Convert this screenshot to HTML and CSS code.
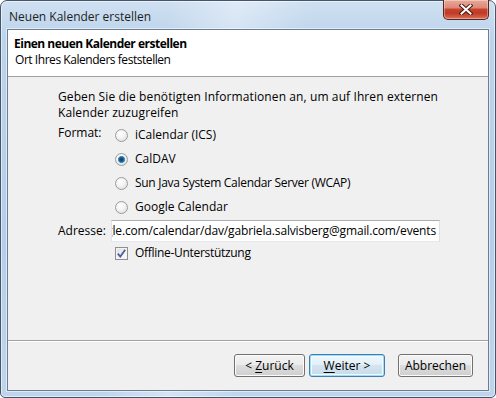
FILE: index.html
```html
<!DOCTYPE html>
<html lang="de">
<head>
<meta charset="utf-8">
<title>Neuen Kalender erstellen</title>
<link rel="stylesheet" href="styles.css">
</head>
<body>
<div class="window">
  <div class="titlebar">
    <span class="title">Neuen Kalender erstellen</span>
    <button class="close" aria-label="Schließen">
      <svg width="14" height="11" viewBox="0 0 14 11"><path d="M2.5 1.5 L11.5 9.5 M11.5 1.5 L2.5 9.5" stroke="#4a1a12" stroke-width="4" stroke-linecap="square" fill="none"/><path d="M2.5 1.5 L11.5 9.5 M11.5 1.5 L2.5 9.5" stroke="#ffffff" stroke-width="2" stroke-linecap="square" fill="none"/></svg>
    </button>
  </div>
  <div class="client">
    <div class="header">
      <div class="h-title">Einen neuen Kalender erstellen</div>
      <div class="h-sub">Ort Ihres Kalenders feststellen</div>
    </div>
    <div class="content">
      <p class="intro">Geben Sie die benötigten Informationen an, um auf Ihren externen<br>Kalender zuzugreifen</p>
      <div class="form">
        <div class="label label-format">Format:</div>
        <div class="radios">
          <div class="opt"><span class="radio"></span><span class="lbl">iCalendar (ICS)</span></div>
          <div class="opt"><span class="radio checked"></span><span class="lbl">CalDAV</span></div>
          <div class="opt"><span class="radio"></span><span class="lbl narrow">Sun Java System Calendar Server (WCAP)</span></div>
          <div class="opt"><span class="radio"></span><span class="lbl">Google Calendar</span></div>
        </div>
        <div class="label label-addr">Adresse:</div>
        <div class="input"><span>gle.com/calendar/dav/gabriela.salvisberg@gmail.com/events</span></div>
        <div class="spacer"></div>
        <div class="opt check-row"><span class="checkbox"><svg width="9" height="9" viewBox="0 0 9 9"><path d="M0.8 4.6 L3.3 7.6 L8.2 0.8" stroke="#4c619a" stroke-width="1.8" fill="none"/></svg></span><span class="lbl narrow">Offline-Unterstützung</span></div>
      </div>
    </div>
    <div class="footer">
      <button class="btn btn-back">&lt; <u>Z</u>urück</button>
      <button class="btn btn-next default"><u>W</u>eiter &gt;</button>
      <button class="btn btn-cancel">Abbrechen</button>
    </div>
  </div>
</div>
</body>
</html>
```

FILE: styles.css
```css
html, body {
  margin: 0;
  padding: 0;
  width: 496px;
  height: 398px;
  overflow: hidden;
  background: #ffffff;
}

body {
  font-family: "Open Sans", "Noto Sans", "DejaVu Sans", sans-serif;
  font-size: 12px;
  color: #000;
}

.window {
  box-sizing: border-box;
  width: 496px;
  height: 398px;
  border: 1px solid #44566c;
  border-radius: 7px 7px 5px 5px;
  background:
    linear-gradient(100deg, rgba(255,255,255,0) 30%, rgba(255,255,255,0.35) 42%, rgba(255,255,255,0) 55%),
    linear-gradient(180deg, #cfe0f2 0%, #bcd3ea 10%, #b6cee8 60%, #bfd5ec 100%);
  padding: 0 6px 6px 6px;
  display: flex;
  flex-direction: column;
  box-shadow: inset 0 0 0 1px rgba(255,255,255,0.55);
}

.titlebar {
  height: 28px;
  display: flex;
  align-items: flex-start;
}

.title {
  padding: 8px 0 0 2px;
  line-height: 16px;
  color: #1e1e1e;
}

.close {
  margin-left: auto;
  margin-top: -1px;
  width: 46px;
  height: 20px;
  padding: 0;
  border: 1px solid #5b2419;
  border-top: none;
  border-radius: 0 0 5px 5px;
  background: linear-gradient(180deg, #e9a99b 0%, #dc8a77 40%, #c6432c 50%, #c13a25 70%, #d9735d 100%);
  box-shadow: inset 0 0 0 1px rgba(255,255,255,0.35);
  display: flex;
  align-items: center;
  justify-content: center;
}

.client {
  flex: 1;
  display: flex;
  flex-direction: column;
  border: 1px solid #6c7e93;
  background: #f0f0f0;
  box-shadow: 0 0 0 1px rgba(255,255,255,0.5);
}

.header {
  height: 47px;
  box-sizing: border-box;
  background: #ffffff;
  border-bottom: 1px solid #a0a0a0;
  padding: 6px 0 0 6px;
  line-height: 16px;
}

.h-title {
  font-weight: bold;
  letter-spacing: -0.5px;
}

.h-sub {
  padding-left: 1px;
  letter-spacing: -0.45px;
}

.content {
  padding: 12px 0 0 50px;
  line-height: 16px;
}

.intro {
  margin: 0;
  letter-spacing: 0.1px;
}

.form {
  margin-top: 2px;
  display: grid;
  grid-template-columns: 53px 329px;
  align-items: center;
}

.label-format {
  align-self: start;
  line-height: 20px;
}

.radios {
  display: flex;
  flex-direction: column;
}

.opt {
  height: 24px;
  display: flex;
  align-items: center;
}

.lbl.narrow {
  letter-spacing: -0.3px;
}

.radio {
  box-sizing: border-box;
  width: 13px;
  height: 13px;
  margin: 0 7px 0 4px;
  border-radius: 50%;
  border: 1px solid #9a9c9e;
  background: radial-gradient(circle at 40% 35%, #ffffff 0%, #f2f2f2 45%, #d6d6d6 100%);
  flex: none;
}

.radio.checked {
  background:
    radial-gradient(circle at 50% 50%, #17395a 0px, #1e5a8a 2px, #4b9fd6 3.4px, rgba(0,0,0,0) 3.8px),
    radial-gradient(circle at 40% 35%, #ffffff 0%, #f2f2f2 45%, #d6d6d6 100%);
}

.label-addr,
.input {
  margin-top: 1px;
}

.input {
  box-sizing: border-box;
  height: 22px;
  background: #ffffff;
  border: 1px solid;
  border-color: #abadb3 #dbdfe6 #e3e9ef #e2e3ea;
  display: flex;
  justify-content: flex-end;
  align-items: center;
  overflow: hidden;
  white-space: nowrap;
  padding: 0 3px 0 2px;
  letter-spacing: -0.15px;
}

.input span {
  flex: none;
}

.check-row {
  height: 22px;
}

.checkbox {
  box-sizing: border-box;
  width: 13px;
  height: 13px;
  margin: 0 7px 0 4px;
  border: 1px solid #8f8f8f;
  background: linear-gradient(135deg, #dcdcdc 0%, #f4f4f4 60%, #ffffff 100%);
  box-shadow: inset 0 0 0 1px #f4f4f4;
  display: flex;
  align-items: center;
  justify-content: center;
  flex: none;
}

.footer {
  margin-top: auto;
  border-top: 1px solid #a0a0a0;
  box-shadow: inset 0 1px 0 #ffffff;
  padding: 13px 15px 13px 0;
  display: flex;
  justify-content: flex-end;
}

.btn {
  box-sizing: border-box;
  height: 23px;
  padding: 0;
  font-family: inherit;
  font-size: 12px;
  color: #000;
  border: 1px solid #707070;
  border-radius: 3px;
  background: linear-gradient(180deg, #f2f2f2 0%, #ebebeb 49%, #dddddd 50%, #cfcfcf 100%);
  box-shadow: inset 0 0 0 1px #fbfbfb;
}

.btn u {
  text-decoration-thickness: 1px;
  text-underline-offset: 2px;
}

.btn-back {
  width: 71px;
}

.btn-next {
  width: 76px;
  margin-left: 4px;
}

.btn-cancel {
  width: 75px;
  margin-left: 13px;
}

.btn.default {
  border-color: #3c7fb1;
  box-shadow: inset 0 0 0 1px #9fdcf6, inset 0 0 0 2px #f4fbfe;
  background: linear-gradient(180deg, #eef7fc 0%, #e3eff7 49%, #d4e4ef 50%, #c7dbe9 100%);
}
```
